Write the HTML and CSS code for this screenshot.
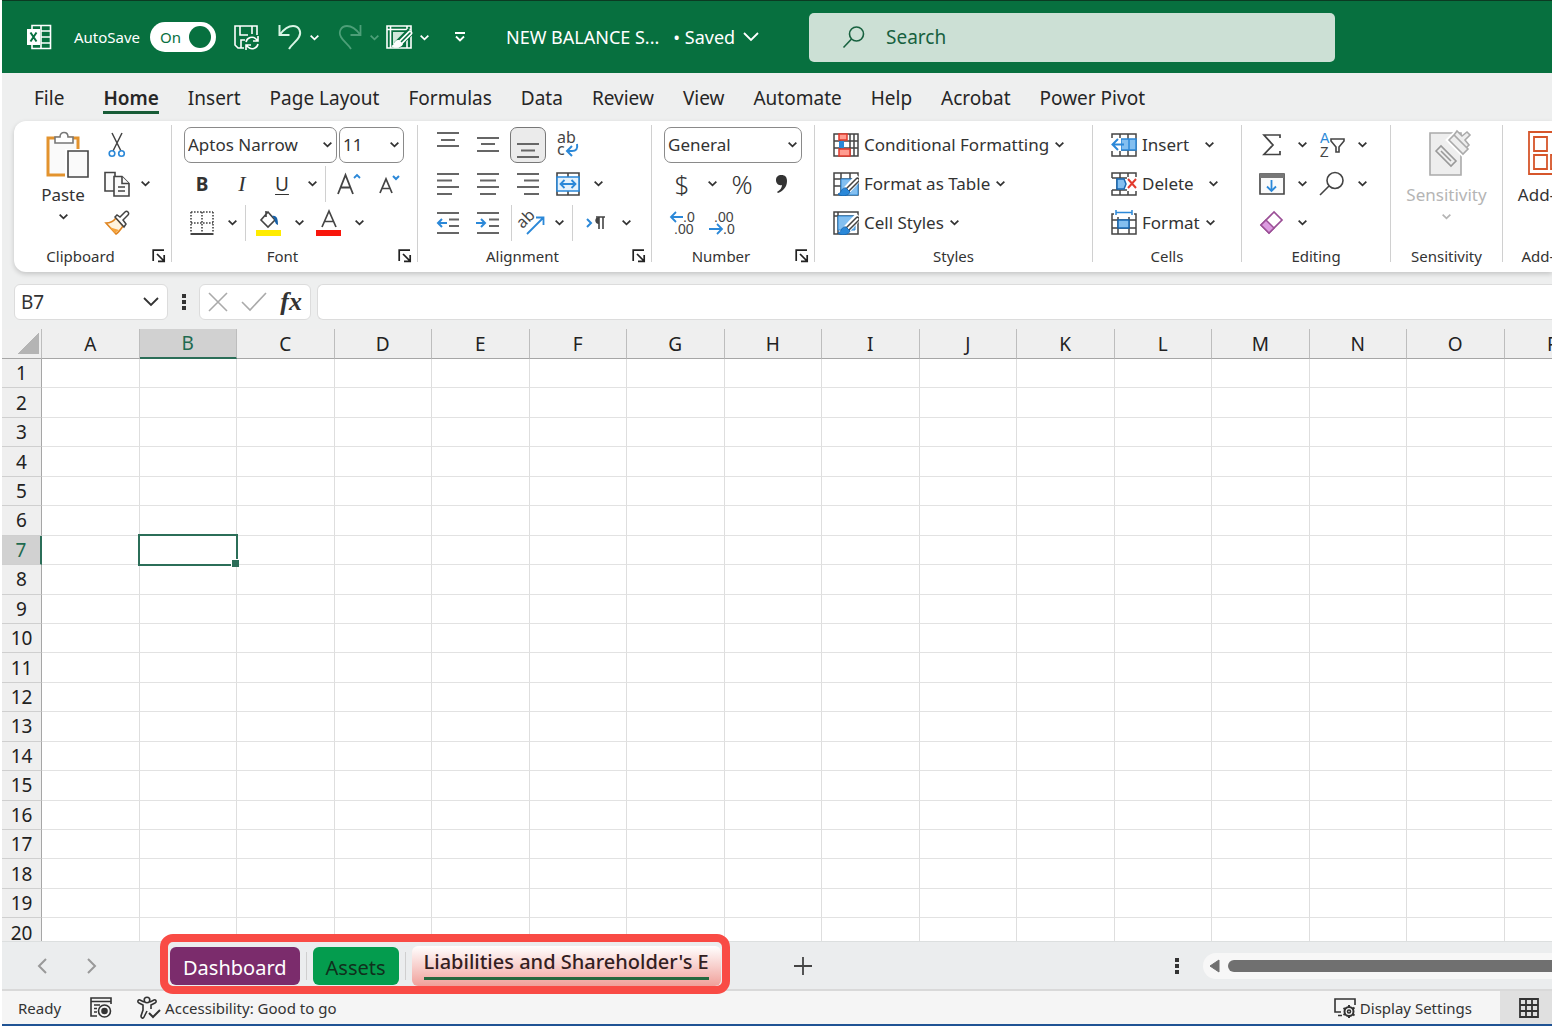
FILE: index.html
```html
<!DOCTYPE html>
<html lang="en">
  <head>
    <meta charset="UTF-8" />
    <meta name="viewport" content="width=device-width, initial-scale=1.0" />
    <title>NEW BALANCE SHEET - Excel</title>
    <link rel="stylesheet" href="styles.css">
  </head>
  <body>
    <!-- shared icons -->
    <svg class="defs" aria-hidden="true">
      <symbol id="chev" viewBox="0 0 10 10"><path d="M1.5 3.2 5 6.6 8.5 3.2" fill="none" stroke="currentColor" stroke-width="1.6" /></symbol>
      <symbol id="launch" viewBox="0 0 14 14"><path d="M1.2 12V1.2H12M5 5l7 7M12.2 6v6.4H6" fill="none" stroke="#222" stroke-width="1.7" /></symbol>
      <symbol id="brush" viewBox="0 0 26 24"><path d="M26 5 12 20" stroke="#fff" stroke-width="8" /><path d="M24.5 8 14 18.500" stroke="#444" stroke-width="5" stroke-linecap="round" /><path d="M24.5 8 14 18.500" stroke="#fff" stroke-width="2" stroke-linecap="round" /><path d="M13 16c-5-1-4 5-8 6 3 3 11 2 12-2z" fill="#2b88d8" stroke="#1769b5" /></symbol>
    </svg>

    <div class="app">
      <header class="titlebar">
        <svg class="logo" width="26" height="26" viewBox="0 0 26 26" fill="none" stroke="#fff" stroke-width="1.6"><path d="M6 5V1.500h18.500v23H6V21M15 1.500v23M15 7h9M15 13h9M15 19h9" /><path d="M1 5h13v16H1z" fill="#fff" stroke="none" /><path d="m4.500 8.500 6 9M10.500 8.500l-6 9" stroke="#07703f" stroke-width="2" /></svg>
        <span class="autosave-label" id="autosave">AutoSave</span>
        <label class="switch">
          <input type="checkbox" checked aria-labelledby="autosave" />
          <span class="switch-text">On</span>
          <span class="knob"></span>
        </label>
        <button type="button" class="tb-btn" aria-label="Save">
          <svg width="27" height="27" viewBox="0 0 27 27" fill="none" stroke="#fff" stroke-width="1.6"><path d="M11 24H5l-3-3V2h22v9M7 2v9h8M19 2v8M8 24v-8h4" /><path d="M13 18a6 6 0 0 1 10-3l2 2M25 12v5h-5M25 20a6 6 0 0 1-10 3l-2-2M13 26v-5h5" /></svg>
        </button>
        <button type="button" class="tb-btn undo" aria-label="Undo">
          <svg width="24" height="26" viewBox="0 0 24 26" fill="none" stroke="#d9f5e5" stroke-width="2"><path d="M1.5 1v10h10M2 10.500C6 5 10 2 15 2c6 0 9 6 6 11-2 4-7 7-10 12" /></svg>
        </button>
        <button type="button" class="chev" aria-label="Undo list"><svg width="11" height="11"><use href="#chev" /></svg></button>
        <button type="button" class="tb-btn redo" aria-label="Redo" disabled>
          <svg width="24" height="26" viewBox="0 0 24 26" fill="none" stroke="#4d9f78" stroke-width="1.8"><path d="M22.500 1v10h-10M22 10.500C18 5 14 2 9 2 3 2 0 8 3 13c2 4 7 7 10 12" /></svg>
        </button>
        <button type="button" class="chev faded" aria-label="Redo list" disabled><svg width="11" height="11"><use href="#chev" /></svg></button>
        <button type="button" class="tb-btn" aria-label="Draw table">
          <svg width="26" height="26" viewBox="0 0 26 26" fill="none" stroke="#fff" stroke-width="1.6"><path d="M1 2h24v22H1zM1 5.500h24M4.500 2v22M21 2v22" /><path d="M7 8h12v4l-8 8H7z" fill="#cfe8da" stroke="none" /><path d="M25 7 11 21" stroke="#07703f" stroke-width="8" /><path d="M24 9 15 18" stroke-width="5" stroke-linecap="round" /><path d="M24 9 15 18" stroke="#07703f" stroke-width="1.6" stroke-linecap="round" /><path d="M13 16c-5-1-4 5-8 6 3 3 11 2 12-2z" fill="#fff" stroke="none" /></svg>
        </button>
        <button type="button" class="chev" aria-label="Draw table options"><svg width="11" height="11"><use href="#chev" /></svg></button>
        <button type="button" class="tb-btn customize" aria-label="Customize toolbar">
          <svg width="12" height="12" viewBox="0 0 12 12" fill="none" stroke="#fff" stroke-width="1.8"><path d="M1 2h10M2 5.500l4 4 4-4" /></svg>
        </button>
        <button type="button" class="doc-title">
          <span>NEW BALANCE S...</span>
          <span class="saved">• Saved</span>
          <svg width="16" height="10" viewBox="0 0 16 10" fill="none" stroke="#fff" stroke-width="1.8"><path d="m1 1 7 7 7-7" /></svg>
        </button>
        <label class="search">
          <svg width="24" height="24" viewBox="0 0 24 24" fill="none" stroke="#17613f" stroke-width="1.6"><circle cx="14.5" cy="9" r="7" /><path d="M9.500 14 1.500 22.500" /></svg>
          <input type="text" placeholder="Search" aria-label="Search" />
        </label>
      </header>

      <nav class="menu">
        <a href="#" class="file">File</a>
        <a href="#" class="active">Home</a>
        <a href="#">Insert</a>
        <a href="#">Page Layout</a>
        <a href="#">Formulas</a>
        <a href="#">Data</a>
        <a href="#">Review</a>
        <a href="#">View</a>
        <a href="#">Automate</a>
        <a href="#">Help</a>
        <a href="#">Acrobat</a>
        <a href="#">Power Pivot</a>
      </nav>

      <div class="ribbon">
        <section class="group clipboard">
          <div class="columns">
            <button type="button" class="big">
              <svg width="52" height="48" viewBox="-8 0 52 48"><path d="M3 7h30v37H3z" fill="#fafafa" stroke="#e3932e" stroke-width="3" /><path d="M10 12V6h5c0-6 8-6 8 0h5v6z" fill="#fff" stroke="#777" stroke-width="1.6" /><path d="M20 18h24v30H20z" fill="#fff" /><path d="M23 20h20v26H23z" fill="#fafafa" stroke="#444" stroke-width="1.6" /></svg>
              <span>Paste</span>
              <svg width="11" height="11"><use href="#chev" /></svg>
            </button>
            <div class="rows">
              <div class="row">
                <button type="button" class="btn" aria-label="Cut"><svg width="18" height="26" viewBox="0 0 18 26" fill="none"><path d="m4 1 9 18M14 1 5 19" stroke="#444" stroke-width="1.5" /><circle cx="4" cy="21.5" r="2.8" stroke="#2b88d8" stroke-width="1.6" /><circle cx="13.5" cy="21.5" r="2.8" stroke="#2b88d8" stroke-width="1.6" /></svg></button>
              </div>
              <div class="row">
                <button type="button" class="btn" aria-label="Copy"><svg width="26" height="26" viewBox="0 0 26 26" fill="#fafafa" stroke="#444" stroke-width="1.6"><path d="M1 1.500h10V20H1z" /><path d="M10 5.500h8l7 7V25H10z" /><path d="M18 5.500v7h7M14 16h7M14 20h7" /></svg></button>
                <button type="button" class="chev" aria-label="Copy options"><svg width="11" height="11"><use href="#chev" /></svg></button>
              </div>
              <div class="row">
                <button type="button" class="btn" aria-label="Format Painter"><svg width="26" height="26" viewBox="0 0 26 26"><path d="M2 13c4 0 7-1 10-5l7 8c-2 3-4 6-7 8z" fill="#fff3df" stroke="#df8420" stroke-width="1.6" /><path d="m5 17 10 3-4 3z" fill="#f5a33b" /><path d="m11 7 9 10 2-3-3-4 5-5c2-2-1-5-3-3l-5 5-3-2z" fill="#fff" stroke="#444" stroke-width="1.5" /></svg></button>
              </div>
            </div>
          </div>
          <div class="caption"><span>Clipboard</span><button type="button" class="launch" aria-label="Clipboard settings"><svg width="14" height="14"><use href="#launch" /></svg></button></div>
        </section>

        <section class="group font">
          <div class="row">
            <span class="combo wide"><select aria-label="Font"><option>Aptos Narrow</option></select><svg width="11" height="11"><use href="#chev" /></svg></span>
            <span class="combo small"><select aria-label="Font size"><option>11</option></select><svg width="11" height="11"><use href="#chev" /></svg></span>
          </div>
          <div class="row">
            <button type="button" class="btn bold">B</button>
            <button type="button" class="btn italic">I</button>
            <button type="button" class="btn under">U</button>
            <button type="button" class="chev" aria-label="Underline options"><svg width="11" height="11"><use href="#chev" /></svg></button>
            <i class="sep"></i>
            <button type="button" class="btn" aria-label="Grow font"><svg width="24" height="24" viewBox="0 0 24 24" fill="none" stroke="#444" stroke-width="1.8"><path d="M1 22 8.500 3 16 22M4 15.500h9.500" /><path d="m17 6 3-3 3 3" stroke="#2b88d8" /></svg></button>
            <button type="button" class="btn" aria-label="Shrink font"><svg width="22" height="22" viewBox="0 0 22 22" fill="none" stroke="#444" stroke-width="1.7"><path d="M2 20 8 6l6 14M4 15.500h8" /><path d="m15 3 3 3 3-3" stroke="#2b88d8" stroke-width="2" /></svg></button>
          </div>
          <div class="row">
            <button type="button" class="btn" aria-label="Borders"><svg width="24" height="24" viewBox="0 0 24 24" fill="none" stroke="#444" stroke-width="1.6"><path d="M1 1h22M1 12h22M1 1v21M12 1v21M23 1v21" stroke-dasharray="1.6 1.4" /><path d="M.5 23h23" stroke-width="2" /></svg></button>
            <button type="button" class="chev" aria-label="Border options"><svg width="11" height="11"><use href="#chev" /></svg></button>
            <i class="sep"></i>
            <button type="button" class="btn" aria-label="Fill color"><svg width="26" height="26" viewBox="0 0 26 26"><path d="m12 2 7 8-7 7-7-7zM10 1v6" fill="#fff" stroke="#444" stroke-width="1.6" /><path d="M16 6c5-1 6 3 6 9-3-1-3-4-4-7z" fill="#1560a8" /><path d="M0 20h25v6H0z" fill="#ffec00" /></svg></button>
            <button type="button" class="chev" aria-label="Fill options"><svg width="11" height="11"><use href="#chev" /></svg></button>
            <button type="button" class="btn" aria-label="Font color"><svg width="26" height="26" viewBox="0 0 26 26"><path d="m6 17 7-16 7 16M8.500 11.500h9" fill="none" stroke="#444" stroke-width="1.7" /><path d="M0 20h25v6H0z" fill="#f8160c" /></svg></button>
            <button type="button" class="chev" aria-label="Font color options"><svg width="11" height="11"><use href="#chev" /></svg></button>
          </div>
          <div class="caption"><span>Font</span><button type="button" class="launch" aria-label="Font settings"><svg width="14" height="14"><use href="#launch" /></svg></button></div>
        </section>

        <section class="group alignment">
          <div class="row">
            <button type="button" class="btn" aria-label="Top align"><svg class="lines" width="24" height="24" viewBox="0 0 24 24"><path d="M1 0h22M5 7h14M1 13h22" /></svg></button>
            <button type="button" class="btn" aria-label="Middle align"><svg class="lines" width="24" height="24" viewBox="0 0 24 24"><path d="M1 5h22M5 11h14M1 18h22" /></svg></button>
            <button type="button" class="btn pressed" aria-label="Bottom align"><svg class="lines" width="24" height="24" viewBox="0 0 24 24"><path d="M1 11h22M5 17.500h14M1 24h22" /></svg></button>
            <button type="button" class="btn wrap" aria-label="Wrap text"><svg width="24" height="26" viewBox="0 0 24 26"><text x="1" y="11">ab</text><text x="1" y="23">c</text><path d="M21 12c1 5-1 7-5 7h-4M16 14l-5 5 5 5" fill="none" stroke="#2b88d8" stroke-width="2" /></svg></button>
          </div>
          <div class="row">
            <button type="button" class="btn" aria-label="Align left"><svg class="lines" width="24" height="24" viewBox="0 0 24 24"><path d="M1 2h22M1 8.500h15M1 15h22M1 22h15" /></svg></button>
            <button type="button" class="btn" aria-label="Center"><svg class="lines" width="24" height="24" viewBox="0 0 24 24"><path d="M1 2h22M4 8.500h16M1 15h22M4 22h16" /></svg></button>
            <button type="button" class="btn" aria-label="Align right"><svg class="lines" width="24" height="24" viewBox="0 0 24 24"><path d="M1 2h22M8 8.500h15M1 15h22M8 22h15" /></svg></button>
            <button type="button" class="btn" aria-label="Merge and center"><svg width="24" height="24" viewBox="0 0 24 24" fill="none"><path d="M1 1h22v22H1zM12 1v4M12 19v4" stroke="#444" stroke-width="1.6" /><path d="M1 5h22v14H1z" fill="#e5f2fc" stroke="#2b88d8" stroke-width="1.6" /><path d="M5 12h14M8.500 8 4.500 12l4 4M15.500 8l4 4-4 4" stroke="#2b88d8" stroke-width="1.8" /></svg></button>
            <button type="button" class="chev" aria-label="Merge options"><svg width="11" height="11"><use href="#chev" /></svg></button>
          </div>
          <div class="row">
            <button type="button" class="btn" aria-label="Decrease indent"><svg class="lines" width="24" height="24" viewBox="0 0 24 24"><path d="M1 2h22M13 8.500h10M13 15h10M1 22h22" /><path class="blue" d="M11 12H2M6 8l-4 4 4 4" /></svg></button>
            <button type="button" class="btn" aria-label="Increase indent"><svg class="lines" width="24" height="24" viewBox="0 0 24 24"><path d="M1 2h22M13 8.500h10M13 15h10M1 22h22" /><path class="blue" d="M0 12h9M5 8l4 4-4 4" /></svg></button>
            <i class="sep"></i>
            <button type="button" class="btn wrap orient" aria-label="Orientation"><svg width="26" height="26" viewBox="0 0 26 26"><text x="1" y="17" transform="rotate(-45 5 15)">ab</text><path d="M8 24 24 8M17 7.500h7.500V15" fill="none" stroke="#2b88d8" stroke-width="1.8" /></svg></button>
            <button type="button" class="chev" aria-label="Orientation options"><svg width="11" height="11"><use href="#chev" /></svg></button>
            <i class="sep"></i>
            <button type="button" class="btn" aria-label="Text direction"><svg width="20" height="16" viewBox="0 0 20 16" fill="none"><path d="m1 4 4 4-4 4" stroke="#2b88d8" stroke-width="2" /><path d="M13 14V2M17 14V2M10 2h9" stroke="#444" stroke-width="1.6" /><path d="M13 2c-5 0-5 7 0 7z" fill="#444" /></svg></button>
            <button type="button" class="chev" aria-label="Direction options"><svg width="11" height="11"><use href="#chev" /></svg></button>
          </div>
          <div class="caption"><span>Alignment</span><button type="button" class="launch" aria-label="Alignment settings"><svg width="14" height="14"><use href="#launch" /></svg></button></div>
        </section>

        <section class="group number">
          <div class="row">
            <span class="combo medium"><select aria-label="Number format"><option>General</option></select><svg width="11" height="11"><use href="#chev" /></svg></span>
          </div>
          <div class="row">
            <button type="button" class="btn symbol">$</button>
            <button type="button" class="chev" aria-label="Currency options"><svg width="11" height="11"><use href="#chev" /></svg></button>
            <button type="button" class="btn symbol">%</button>
            <button type="button" class="btn" aria-label="Comma style"><svg width="14" height="20" viewBox="0 0 14 20"><path d="M6.500 1C10 1 12 3 12 7c0 6-4 10-9 12l-1-1c3-2 5-4 5-7-4 1-6-2-6-5 0-3 2-5 5.500-5z" fill="#333" /></svg></button>
          </div>
          <div class="row">
            <button type="button" class="btn decimals" aria-label="Increase decimal"><svg width="26" height="26" viewBox="0 0 26 26"><text x="14" y="12">.0</text><text x="5" y="24">.00</text><path d="M14 7H2M7 2 2 7l5 5" fill="none" stroke="#2b88d8" stroke-width="1.8" /></svg></button>
            <button type="button" class="btn decimals" aria-label="Decrease decimal"><svg width="26" height="26" viewBox="0 0 26 26"><text x="5" y="12">.00</text><text x="14" y="24">.0</text><path d="M0 19h12M8 14l5 5-5 5" fill="none" stroke="#2b88d8" stroke-width="1.8" /></svg></button>
          </div>
          <div class="caption"><span>Number</span><button type="button" class="launch" aria-label="Number settings"><svg width="14" height="14"><use href="#launch" /></svg></button></div>
        </section>

        <section class="group styles">
          <div class="row"><button type="button" class="text-btn"><svg width="26" height="24" viewBox="0 0 26 24"><path d="M1 1h24v22H1zM1 8h24M1 15h24M7 1v22M17 1v22M21 1v22" fill="#fff" stroke="#444" stroke-width="1.5" /><path d="M6 1h8v6H6zM6 16h11v7H6z" fill="#ff9c90" stroke="#e23b2e" stroke-width="1.5" /><path d="M6 8h5v7H6z" fill="#2b88d8" /></svg><span>Conditional Formatting</span><svg width="11" height="11"><use href="#chev" /></svg></button></div>
          <div class="row"><button type="button" class="text-btn"><svg width="26" height="24" viewBox="0 0 26 24"><path d="M1 1h24v22H1zM1 7h24M1 14h24M8 1v22M17 1v22" fill="#fff" stroke="#444" stroke-width="1.5" /><path d="M8 7h17v16H8z" fill="#83bff0" stroke="#2b88d8" /><use href="#brush" width="26" height="24" /></svg><span>Format as Table</span><svg width="11" height="11"><use href="#chev" /></svg></button></div>
          <div class="row"><button type="button" class="text-btn"><svg width="26" height="24" viewBox="0 0 26 24"><path d="M1 1h24v22H1zM1 5h24M5 1v22" fill="#fff" stroke="#444" stroke-width="1.5" /><path d="M5 5h17v14H5z" fill="#83bff0" stroke="#2b88d8" /><use href="#brush" width="26" height="24" /></svg><span>Cell Styles</span><svg width="11" height="11"><use href="#chev" /></svg></button></div>
          <div class="caption"><span>Styles</span></div>
        </section>

        <section class="group cells">
          <div class="row"><button type="button" class="text-btn"><svg width="26" height="24" viewBox="0 0 26 24"><path d="M1 1h24v22H1zM1 7h24M1 17h24M9 1v22M17 1v22" fill="#fff" stroke="#444" stroke-width="1.5" /><path d="M10 6h15v11H10z" fill="#83bff0" stroke="#2b88d8" stroke-width="1.5" /><path d="M18 6v11" stroke="#2b88d8" stroke-width="1.5" /><path d="M0 5h10v13H0z" fill="#fff" /><path d="M13 11.500H2M7 6 1.500 11.500 7 17" fill="none" stroke="#2b88d8" stroke-width="2" /></svg><span>Insert</span></button><button type="button" class="chev" aria-label="Insert options"><svg width="11" height="11"><use href="#chev" /></svg></button></div>
          <div class="row"><button type="button" class="text-btn"><svg width="26" height="24" viewBox="0 0 26 24"><path d="M1 6V1h24v5M1 18v5h24v-5M1 6h24M1 18h24M9 1v5M17 1v5M9 18v5M17 18v5M1 6h5v12" fill="none" stroke="#444" stroke-width="1.5" /><path d="M6 7h7l2 5-2 5H6z" fill="#83bff0" stroke="#1769b5" stroke-width="1.5" /><path d="M16 5h10v14H16z" fill="#fff" /><path d="m17 7 8 9M25 7l-8 9" stroke="#e23b2e" stroke-width="2" /></svg><span>Delete</span></button><button type="button" class="chev" aria-label="Delete options"><svg width="11" height="11"><use href="#chev" /></svg></button></div>
          <div class="row"><button type="button" class="text-btn"><svg width="26" height="26" viewBox="0 0 26 26"><path d="M3 4H1v20h24V4h-2M1 10h24M1 18h24M7 7v17M18 7v17" fill="none" stroke="#444" stroke-width="1.5" /><path d="M7 10h11v8H7z" fill="#83bff0" stroke="#1769b5" stroke-width="1.5" /><path d="M5 2.500h16M5 0v5M21 0v5" stroke="#2b88d8" stroke-width="1.5" /></svg><span>Format</span><svg width="11" height="11"><use href="#chev" /></svg></button></div>
          <div class="caption"><span>Cells</span></div>
        </section>

        <section class="group editing">
          <div class="columns">
            <div class="rows">
              <div class="row"><button type="button" class="btn" aria-label="AutoSum"><svg width="20" height="24" viewBox="0 0 20 24"><path d="M18 5V2H2l9 10L2 21.500h16V18" fill="none" stroke="#444" stroke-width="1.7" /></svg></button><button type="button" class="chev" aria-label="AutoSum options"><svg width="11" height="11"><use href="#chev" /></svg></button></div>
              <div class="row"><button type="button" class="btn" aria-label="Fill"><svg width="26" height="24" viewBox="0 0 26 24" fill="none"><path d="M1 2h24v20H1z" fill="#fafafa" stroke="#444" stroke-width="1.6" /><path d="M1 4h24" stroke="#777" stroke-width="4" /><path d="M12.500 8v11M8 14.500l4.500 4.500 4.500-4.500" stroke="#2b88d8" stroke-width="1.8" /></svg></button><button type="button" class="chev" aria-label="Fill options"><svg width="11" height="11"><use href="#chev" /></svg></button></div>
              <div class="row"><button type="button" class="btn" aria-label="Clear"><svg width="26" height="26" viewBox="0 0 26 26"><path d="M15 2 2 15l8 8L23 10z" fill="#fff" stroke="#9b4f96" stroke-width="1.7" /><path d="m7 10 8 8-5 5-8-8z" fill="#dc9be0" stroke="#9b4f96" stroke-width="1.5" /></svg></button><button type="button" class="chev" aria-label="Clear options"><svg width="11" height="11"><use href="#chev" /></svg></button></div>
            </div>
            <div class="rows">
              <div class="row"><button type="button" class="btn sort" aria-label="Sort and filter"><svg width="26" height="26" viewBox="0 0 26 26"><text x="1" y="11" class="a">A</text><text x="1" y="25">Z</text><path d="M12 7h13v2l-5 6v5h-3v-5l-5-6z" fill="#fff" stroke="#444" stroke-width="1.6" /></svg></button><button type="button" class="chev" aria-label="Sort options"><svg width="11" height="11"><use href="#chev" /></svg></button></div>
              <div class="row"><button type="button" class="btn" aria-label="Find and select"><svg width="26" height="26" viewBox="0 0 26 26" fill="none" stroke="#444" stroke-width="1.6"><circle cx="16" cy="9.5" r="8" /><path d="m10 15-9 9" /></svg></button><button type="button" class="chev" aria-label="Find options"><svg width="11" height="11"><use href="#chev" /></svg></button></div>
            </div>
          </div>
          <div class="caption"><span>Editing</span></div>
        </section>

        <section class="group sensitivity">
          <button type="button" class="big" disabled>
            <svg width="42" height="48" viewBox="-3 0 42 48" fill="#eee" stroke="#aaa" stroke-width="1.6"><path d="M1 2h31v42H1z" /><path d="m7 20 5-5 15 15-5 5zM12 20l10 10" stroke="#999" /><path d="m19 9 7-7 15 15-7 7z" stroke="#fff" stroke-width="4" /><path d="m20 9 5-5 14 14-5 5zM25 4l3-4 5 5 5-4 3 3-5 5 4 5-3 3" /></svg>
            <span>Sensitivity</span>
            <svg width="11" height="11"><use href="#chev" /></svg>
          </button>
          <div class="caption"><span>Sensitivity</span></div>
        </section>

        <section class="group addins">
          <button type="button" class="big">
            <svg width="40" height="48" viewBox="0 0 40 48" fill="none" stroke="#d6562b" stroke-width="1.8"><path d="M1 1h38v42H1zM6 6h13v14H6zM6 24h13v14H6zM23 24h13v14H23z" /></svg>
            <span>Add-ins</span>
          </button>
          <div class="caption"><span>Add-ins</span></div>
        </section>
      </div>

      <div class="formula-bar">
        <label class="name-box">
          <input type="text" value="B7" aria-label="Name box" />
          <svg width="16" height="10" viewBox="0 0 16 10" fill="none" stroke="#333" stroke-width="1.8"><path d="m1 1 7 7 7-7" /></svg>
        </label>
        <svg class="dots" width="4" height="18" viewBox="0 0 4 18"><path d="M0 1h4v4H0zM0 7h4v4H0zM0 13h4v4H0z" fill="#333" /></svg>
        <div class="fx-box">
          <button type="button" aria-label="Cancel"><svg width="20" height="20" viewBox="0 0 20 20" fill="none" stroke="#aaa" stroke-width="1.6"><path d="m1 1 18 18M19 1 1 19" /></svg></button>
          <button type="button" aria-label="Enter"><svg width="26" height="20" viewBox="0 0 26 20" fill="none" stroke="#aaa" stroke-width="1.6"><path d="m1 10 8 8L25 1" /></svg></button>
          <button type="button" class="fx">fx</button>
        </div>
        <input class="formula" type="text" aria-label="Formula" />
      </div>

      <main class="sheet">
        <table id="grid"></table>
      </main>

      <div class="sheet-bar">
        <button type="button" class="nav" aria-label="Previous sheet"><svg width="10" height="16" viewBox="0 0 10 16" fill="none" stroke="#999" stroke-width="2"><path d="M9 1 2 8l7 7" /></svg></button>
        <button type="button" class="nav" aria-label="Next sheet"><svg width="10" height="16" viewBox="0 0 10 16" fill="none" stroke="#999" stroke-width="2"><path d="m1 1 7 7-7 7" /></svg></button>
        <div class="tabs">
          <button type="button" class="tab purple">Dashboard</button>
          <i class="tab-sep"></i>
          <button type="button" class="tab green">Assets</button>
          <i class="tab-sep"></i>
          <button type="button" class="tab current"><span>Liabilities and Shareholder's E</span></button>
        </div>
        <button type="button" class="add-sheet" aria-label="New sheet"><svg width="18" height="18" viewBox="0 0 18 18" stroke="#444" stroke-width="1.8"><path d="M9 0v18M0 9h18" /></svg></button>
        <svg class="dots" width="4" height="18" viewBox="0 0 4 18"><path d="M0 1h4v4H0zM0 7h4v4H0zM0 13h4v4H0z" fill="#333" /></svg>
        <div class="scroll">
          <svg width="11" height="14" viewBox="0 0 11 14"><path d="M10 1v12L1 7z" fill="#707070" stroke="#707070" stroke-linejoin="round" /></svg>
          <div class="thumb"></div>
        </div>
      </div>

      <footer class="status">
        <span class="ready">Ready</span>
        <svg class="macro" width="24" height="22" viewBox="0 0 24 22" fill="none" stroke="#333" stroke-width="1.6"><path d="M8 19H2V1h20v6M2 4.500h20M5 8h6M5 11.500h3M5 15h3" /><circle cx="15.5" cy="14" r="6" /><circle cx="15.5" cy="14" r="2.5" fill="#333" /></svg>
        <button type="button" class="access">
          <svg width="24" height="24" viewBox="0 0 24 24" fill="none" stroke="#333" stroke-width="1.6"><circle cx="10" cy="4" r="2.8" /><path d="M7 6 3 4C1 3 0 6 2 7l4 2v5l-2 6c0 2 2 3 3 1l3-6M13 6l4-2c2-1 3 2 1 3l-4 2v4" /><path d="m12 17 4 4 7-7" stroke-width="2" /></svg>
          <span>Accessibility: Good to go</span>
        </button>
        <button type="button" class="display">
          <svg width="22" height="22" viewBox="0 0 22 22" fill="none" stroke="#333" stroke-width="1.6"><path d="M7 15H1V2h20v6M4 18.500h4" /><circle cx="15" cy="14.5" r="4.5" stroke-width="2" /><circle cx="15" cy="14.5" r="1.5" /><path d="M15 8v2M15 19v2M9.500 11l2 1.500M18.500 17l2 1.500M9.500 18l2-1.500M18.500 12l2-1.500" stroke-width="2" /></svg>
          <span>Display Settings</span>
        </button>
        <button type="button" class="view" aria-label="Normal view"><svg width="20" height="20" viewBox="0 0 20 20" fill="none" stroke="#333" stroke-width="1.8"><path d="M1 1h18v18H1zM1 7h18M1 13h18M7 1v18M13 1v18" /></svg></button>
      </footer>
    </div>

    <script>
      const columns = "ABCDEFGHIJKLMNOP".split("");
      const grid = document.getElementById("grid");

      const head = grid.createTHead().insertRow();
      head.innerHTML = '<th class="corner"></th>';
      columns.forEach((name) => {
        const th = document.createElement("th");
        th.textContent = name;
        if (name === "B") th.className = "on";
        head.appendChild(th);
      });

      const body = grid.createTBody();
      for (let i = 1; i <= 20; i++) {
        const row = body.insertRow();
        const th = document.createElement("th");
        th.textContent = i;
        if (i === 7) th.className = "on";
        row.appendChild(th);
        columns.forEach((name) => {
          const cell = row.insertCell();
          if (i === 7 && name === "B") cell.className = "selected";
        });
      }
    </script>
  </body>
</html>
```
FILE: styles.css
```css
* {
  box-sizing: border-box;
}

body {
  margin: 0;
  background-color: #fff;
  font-family: "Noto Sans", "Open Sans", sans-serif;
  font-size: 17px;
  color: #333;
}

button,
input,
select {
  font: inherit;
  color: inherit;
  border: none;
  background: none;
  padding: 0;
  margin: 0;
}

button {
  display: flex;
  align-items: center;
  justify-content: center;
  flex-shrink: 0;
  white-space: nowrap;
}

svg {
  flex-shrink: 0;
  overflow: visible;
}

.defs {
  position: absolute;
  width: 0;
  height: 0;
}

.app {
  display: flex;
  flex-direction: column;
  height: 100vh;
  margin-left: 2px;
  overflow: hidden;
  background-color: #eeefef;
  border-bottom: 2px solid #1f5394;
}

/* title bar */
.titlebar {
  display: flex;
  align-items: center;
  height: 73px;
  flex-shrink: 0;
  padding-left: 24px;
  background-color: #07703f;
  border-top: 1px solid #0b3a22;
  color: #fff;
  font-size: 18px;
}

.autosave-label {
  width: 76px;
  margin-left: 22px;
  font-size: 15px;
}

.switch {
  display: flex;
  align-items: center;
  justify-content: space-between;
  width: 66px;
  height: 30px;
  padding: 0 5px 0 10px;
  margin-right: 17px;
  border-radius: 15px;
  background-color: #fff;
  color: #07703f;
  font-size: 15px;
}

.switch input {
  position: absolute;
  opacity: 0;
}

.knob {
  width: 22px;
  height: 22px;
  border-radius: 50%;
  background-color: #07703f;
}

.tb-btn {
  height: 36px;
}

.undo {
  margin-left: 18px;
}

.redo {
  margin-left: 12px;
}

.chev {
  width: 20px;
  height: 36px;
}

.titlebar .chev {
  width: 24px;
}

.faded {
  color: #4d9f78;
}

.customize {
  margin: 0 40px 0 18px;
}

.doc-title {
  gap: 8px;
}

.saved {
  margin-left: 6px;
}

.search {
  display: flex;
  align-items: center;
  gap: 20px;
  flex: 0 1 526px;
  height: 49px;
  margin-left: auto;
  margin-right: 217px;
  padding-left: 33px;
  border-radius: 5px;
  background-color: #cce0d5;
}

.search input {
  flex: 1;
  min-width: 0;
  font-size: 19px;
}

.search input::placeholder {
  color: #17613f;
  opacity: 1;
}

/* menu */
.menu {
  display: flex;
  gap: 29px;
  height: 48px;
  flex-shrink: 0;
  align-items: center;
  padding: 5px 0 0 32px;
}

.menu a {
  color: #262626;
  text-decoration: none;
  font-size: 19px;
  line-height: 26px;
  white-space: nowrap;
  border-bottom: 3px solid transparent;
}

.menu .file {
  margin-right: 10px;
}

.menu .active {
  font-weight: 600;
  border-color: #185c37;
}

/* ribbon */
.ribbon {
  display: flex;
  flex-shrink: 0;
  height: 151px;
  margin-left: 12px;
  padding: 4px 0 10px;
  border-radius: 12px 0 0 12px;
  background-color: #fff;
  box-shadow: 0 2px 5px rgba(0, 0, 0, 0.18);
}

.group {
  display: flex;
  flex-direction: column;
  flex-shrink: 0;
  border-right: 1px solid #d0d0d0;
}

.row {
  display: flex;
  align-items: center;
  flex-shrink: 0;
  height: 39px;
}

.group > .row,
.columns {
  padding-left: 10px;
}

.columns {
  display: flex;
}

.caption {
  display: flex;
  align-items: center;
  height: 20px;
  margin-top: auto;
  padding-top: 8px;
  font-size: 15px;
  white-space: nowrap;
}

.caption span {
  flex: 1;
  text-align: center;
}

.launch {
  width: 24px;
}

.clipboard {
  width: 158px;
}

.font {
  width: 246px;
}

.alignment {
  width: 234px;
}

.number {
  width: 163px;
}

.styles {
  width: 278px;
}

.cells {
  width: 149px;
}

.editing {
  width: 149px;
}

.sensitivity {
  width: 112px;
}

.addins {
  width: 90px;
  border-right: none;
}

.btn {
  width: 40px;
  height: 36px;
}

.orient {
  width: 34px;
}

.big {
  flex-direction: column;
  justify-content: flex-start;
  gap: 6px;
  height: 112px;
  padding-top: 6px;
  line-height: 20px;
}

.clipboard .big {
  width: 78px;
}

.clipboard .btn {
  width: 30px;
}

.clipboard .chev {
  margin-left: 3px;
}

.big:disabled {
  color: #b5b5b5;
}

.sep {
  width: 1px;
  height: 36px;
  margin: 0 3px;
  background-color: #d0d0d0;
}

.combo {
  display: flex;
  align-items: center;
  height: 36px;
  margin-left: 2px;
  padding: 0 3px;
  border: 1px solid #8a8a8a;
  border-radius: 7px;
}

.combo select {
  flex: 1;
  min-width: 0;
  appearance: none;
}

.wide {
  width: 153px;
}

.small {
  width: 65px;
}

.medium {
  width: 138px;
}

.bold {
  font-weight: 700;
  font-size: 19px;
}

.italic {
  font-family: "Liberation Serif", serif;
  font-style: italic;
  font-size: 22px;
}

.under {
  font-size: 19px;
  text-decoration: underline;
  text-underline-offset: 3px;
}

.symbol {
  font-size: 26px;
  font-weight: 300;
}

.lines {
  fill: none;
  stroke: #666;
  stroke-width: 1.8;
}

.lines .blue {
  stroke: #2b88d8;
  stroke-width: 2;
}

.pressed {
  width: 36px;
  margin: 0 2px;
  border: 1px solid #777;
  border-radius: 7px;
  background-color: #ebebeb;
}

.wrap text {
  font-size: 16px;
  fill: #444;
}

.decimals text {
  font-family: "Liberation Sans", sans-serif;
  font-size: 14px;
  fill: #444;
}

.sort text {
  font-family: "Liberation Sans", sans-serif;
  font-size: 14px;
  fill: #444;
}

.sort .a {
  fill: #2b88d8;
}

.text-btn {
  gap: 5px;
  height: 36px;
  margin-left: 8px;
}

.cells .chev {
  margin-left: 10px;
}

/* formula bar */
.formula-bar {
  display: flex;
  align-items: center;
  flex-shrink: 0;
  height: 57px;
  padding: 2px 0 0 12px;
}

.name-box,
.fx-box,
.formula {
  display: flex;
  align-items: center;
  height: 36px;
  border: 1px solid #dcdcdc;
  border-radius: 6px;
  background-color: #fff;
}

.name-box {
  width: 154px;
  padding: 0 8px 0 6px;
  font-size: 19px;
}

.name-box input {
  flex: 1;
  min-width: 0;
}

.formula-bar .dots {
  margin: 0 13px 0 14px;
}

.fx-box {
  width: 112px;
  padding: 0 8px;
  justify-content: space-between;
}

.fx {
  font-family: "Liberation Serif", serif;
  font-style: italic;
  font-weight: 700;
  font-size: 26px;
  line-height: 30px;
}

.formula {
  flex: 1;
  margin-left: 6px;
  border-right: none;
  border-radius: 6px 0 0 6px;
}

/* grid */
.sheet {
  flex: 1;
  min-height: 0;
  overflow: hidden;
  background-color: #fff;
}

table {
  width: calc(100% + 50px);
  height: calc(100% + 7px);
  table-layout: fixed;
  border-collapse: separate;
  border-spacing: 0;
}

th,
td {
  padding: 0;
  border-right: 1px solid #dedede;
  border-bottom: 1px solid #e2e2e2;
}

th {
  font-size: 19px;
  font-weight: 400;
  line-height: 20px;
  color: #222;
  background-color: #efefef;
}

thead th {
  height: 30px;
  border-right-color: #bdbdbd;
  border-bottom-color: #a6a6a6;
}

tbody th {
  border-right-color: #a6a6a6;
  border-bottom-color: #cfcfcf;
}

.corner {
  width: 40px;
  background: linear-gradient(135deg, #efefef 50%, #b4b4b4 50%) 16px 4px / 21px 21px no-repeat #efefef;
}

th.on {
  background-color: #d1d1d1;
  color: #1f6b50;
}

thead th.on {
  border-bottom: 2px solid #2b6e58;
}

tbody th.on {
  border-right: 2px solid #2b6e58;
}

.selected {
  position: relative;
}

.selected::before {
  content: "";
  position: absolute;
  inset: -2px;
  border: 2px solid #2b6e58;
}

.selected::after {
  content: "";
  position: absolute;
  right: -3px;
  bottom: -3px;
  width: 7px;
  height: 7px;
  border: 1px solid #fff;
  border-width: 1px 0 0 1px;
  background-color: #2b6e58;
}

/* sheet tabs */
.sheet-bar {
  display: flex;
  align-items: center;
  flex-shrink: 0;
  height: 50px;
  border-top: 1px solid #dcdfdf;
  border-bottom: 2px solid #d9d9d9;
  background-color: #ebedee;
}

.nav {
  width: 50px;
}

.nav:first-child {
  margin-left: 15px;
}

.tabs {
  position: relative;
  display: flex;
  align-items: center;
  margin-left: 53px;
}

/* callout frame round the tabs */
.tabs::after {
  content: "";
  position: absolute;
  inset: -12px -9px -8px -10px;
  border: 8px solid #f94b45;
  border-radius: 13px;
  pointer-events: none;
}

.tab {
  height: 38px;
  padding: 3px 13px 0;
  border-radius: 6px;
  font-size: 20px;
}

.purple {
  background-color: #7b2c6c;
  color: #fff;
}

.green {
  background-color: #049c4e;
  color: #10301c;
}

.current {
  height: 40px;
  padding: 0 12px 4px;
  font-weight: 500;
  color: #33201f;
  background: linear-gradient(#fff, #f0a09a);
}

.current span {
  border-bottom: 3px solid #25693f;
  line-height: 30px;
}

.tab-sep {
  width: 1px;
  height: 28px;
  margin: 0 6px;
  background-color: #cfcfcf;
}

.add-sheet {
  margin-left: 73px;
}

.sheet-bar .dots {
  margin-left: auto;
  margin-right: 24px;
}

.scroll {
  display: flex;
  align-items: center;
  gap: 8px;
  width: 349px;
  height: 26px;
  padding-left: 6px;
  border-radius: 13px 0 0 13px;
  background-color: #f7f7f7;
}

.thumb {
  flex: 1;
  height: 12px;
  border-radius: 6px 0 0 6px;
  background-color: #707070;
}

/* status bar */
.status {
  display: flex;
  align-items: center;
  flex-shrink: 0;
  height: 33px;
  padding-left: 16px;
  background-color: #f5f5f5;
  font-size: 15px;
}

.macro {
  margin: 0 24px 0 28px;
}

.access,
.display {
  gap: 4px;
}

.display {
  margin-left: auto;
  margin-right: 28px;
}

.view {
  width: 52px;
  height: 33px;
  padding-left: 6px;
  background-color: #e0e0e0;
}
```
